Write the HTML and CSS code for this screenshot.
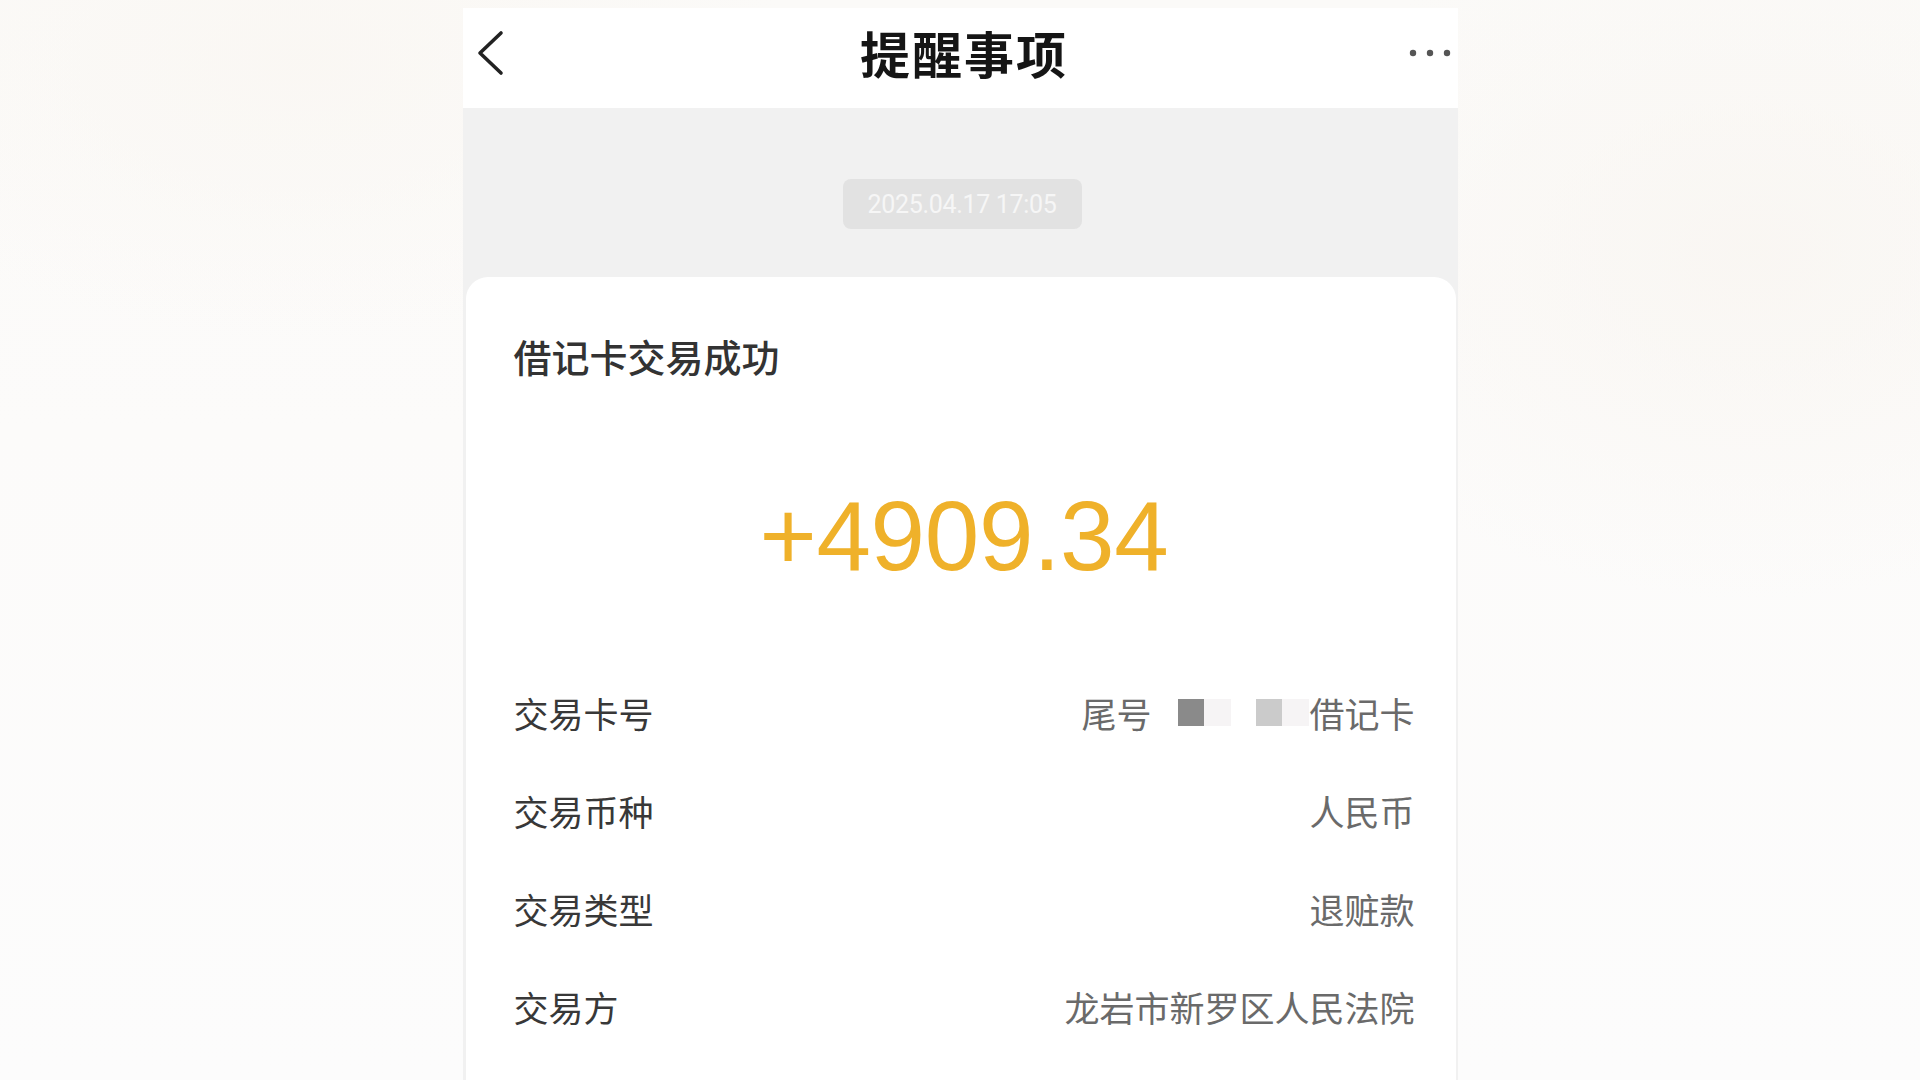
FILE: index.html
```html
<!DOCTYPE html>
<html lang="zh-CN">
<head>
<meta charset="utf-8">
<title>提醒事项</title>
<link rel="stylesheet" href="styles.css">
</head>
<body>
<div class="phone">
  <header class="topbar">
    <svg class="back" width="30" height="46" viewBox="0 0 30 46"><path d="M26 3 L5 23 L26 43" fill="none" stroke="#222" stroke-width="3.6" stroke-linecap="round" stroke-linejoin="round"/></svg>
    <h1 class="title">提醒事项</h1>
    <svg class="more" width="44" height="10" viewBox="0 0 44 10"><circle cx="5" cy="5" r="3.2" fill="#555"/><circle cx="22" cy="5" r="3.2" fill="#555"/><circle cx="39" cy="5" r="3.2" fill="#555"/></svg>
  </header>
  <div class="timebar">
    <span class="stamp">2025.04.17 17:05</span>
  </div>
  <section class="card">
    <h2 class="card-title">借记卡交易成功</h2>
    <div class="amount">+4909.34</div>
    <div class="rows">
      <div class="row">
        <span class="label">交易卡号</span>
        <span class="value">尾号<span class="mosaic"><i class="m dark"></i><i class="m faint"></i><i class="m gap"></i><i class="m light"></i><i class="m faint"></i></span>借记卡</span>
      </div>
      <div class="row">
        <span class="label">交易币种</span>
        <span class="value">人民币</span>
      </div>
      <div class="row">
        <span class="label">交易类型</span>
        <span class="value">退赃款</span>
      </div>
      <div class="row">
        <span class="label">交易方</span>
        <span class="value">龙岩市新罗区人民法院</span>
      </div>
    </div>
  </section>
</div>
</body>
</html>
```

FILE: styles.css
```css
html, body {
  margin: 0;
  padding: 0;
  height: 100%;
  overflow: hidden;
}
body {
  background:
    radial-gradient(ellipse 700px 500px at 1750px 250px, rgba(249,246,242,0.9), rgba(252,251,250,0) 70%),
    radial-gradient(ellipse 700px 400px at 300px 60px, rgba(250,247,243,0.9), rgba(252,251,250,0) 70%),
    linear-gradient(180deg, #fbfaf8 0%, #fcfbfa 40%, #fcfcfc 100%);
  font-family: "Noto Sans CJK SC", "Noto Sans", sans-serif;
}
.phone {
  width: 995px;
  margin: 8px auto 0;
  background: #f1f1f1;
  min-height: 1072px;
}
.topbar {
  height: 100px;
  background: #ffffff;
  display: grid;
  grid-template-columns: 1fr auto 1fr;
  align-items: center;
  padding: 0 6px 0 12px;
  box-sizing: border-box;
}
.back {
  display: block;
  margin-top: -10px;
  justify-self: start;
}
.title {
  margin: -12px 0 0 0;
  font-size: 50px;
  font-weight: 700;
  color: #151515;
  line-height: 1;
  letter-spacing: 2px;
  padding-left: 2px;
}
.more {
  display: block;
  margin-top: -10px;
  justify-self: end;
}
.timebar {
  height: 169px;
  display: flex;
  justify-content: center;
  align-items: flex-start;
  padding-top: 71px;
  box-sizing: border-box;
}
.stamp {
  width: 239px;
  height: 50px;
  border-radius: 8px;
  background: #e2e2e2;
  color: #f6f6f6;
  font-family: Roboto, "Liberation Sans", sans-serif;
  font-size: 25px;
  display: flex;
  align-items: center;
  justify-content: center;
  letter-spacing: -0.3px;
  margin-left: 4px;
}
.card {
  background: #ffffff;
  margin: 0 2px 0 3px;
  border-radius: 22px 22px 0 0;
  padding: 54px 41px 0 48px;
  min-height: 900px;
  box-sizing: border-box;
}
.card-title {
  margin: 0;
  font-size: 38px;
  line-height: 50px;
  font-weight: 500;
  color: #333333;
}
.amount {
  margin-top: 107px;
  text-align: center;
  font-family: "Liberation Sans", Arial, sans-serif;
  font-size: 98px;
  line-height: 96px;
  color: #efb12a;
  letter-spacing: -0.3px;
}
.rows {
  margin-top: 79px;
  display: flex;
  flex-direction: column;
}
.row {
  height: 98px;
  display: flex;
  align-items: center;
  justify-content: space-between;
  font-size: 35px;
}
.label {
  color: #383838;
}
.value {
  color: #6a6a6a;
  display: flex;
  align-items: center;
}
.mosaic {
  display: flex;
  align-items: center;
  margin-left: 27px;
}
.m {
  display: block;
  height: 27px;
}
.m.dark { width: 26px; background: #8a8a8a; }
.m.faint { width: 27px; background: #f6f4f5; }
.m.gap { width: 25px; background: transparent; }
.m.light { width: 26px; background: #cbcbcb; }
```
